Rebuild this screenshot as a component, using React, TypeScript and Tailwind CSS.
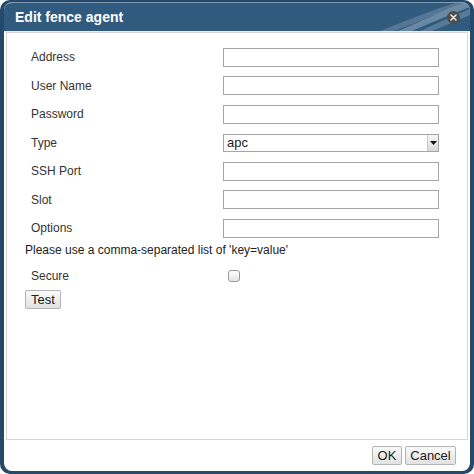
const FIELDS = ["Address", "User Name", "Password", "Type", "SSH Port", "Slot", "Options"];

const font = { fontFamily: '"Liberation Sans", Arial, sans-serif' };

function TextBox() {
  return <div className="h-[19px] w-[216px] border border-[#a5a5a5] bg-white" />;
}

function SelectBox({ value }: { value: string }) {
  return (
    <div className="flex h-[18px] w-[216px] items-center border border-[#a5a5a5] bg-white">
      <span className="flex-1 pl-[3px] text-[13px] leading-none text-[#222]">{value}</span>
      <div className="flex h-full w-[11px] items-center justify-center border-l border-[#c8c8c8] bg-gradient-to-b from-[#f6f6f6] to-[#d9d9d9]">
        <svg width="7" height="4" viewBox="0 0 7 4">
          <path d="M0 0h7L3.5 4z" fill="#111" />
        </svg>
      </div>
    </div>
  );
}

function Btn({ label, w }: { label: string; w: string }) {
  return (
    <button
      className={`h-[19px] ${w} rounded-[2px] border border-[#b3b3b3] bg-gradient-to-b from-[#fafafa] to-[#e2e2e2] text-[13px] leading-none text-[#222]`}
      style={font}
    >
      {label}
    </button>
  );
}

export default function App() {
  return (
    <div className="h-[474px] w-[474px] rounded-[10px] bg-[#25496a] px-[4px] pb-[3px] pt-[2px]" style={font}>
      <div className="flex h-full flex-col overflow-hidden rounded-[8px] border-t border-[#7f9ab2] bg-white">
        {/* title bar */}
        <div className="relative flex h-[28px] items-center bg-[#305a7e] pl-[11px]">
          <svg className="absolute right-0 top-0" width="110" height="28" viewBox="0 0 110 28">
            <path d="M20 28 C45 18 70 8 95 0 L104 0 C80 10 55 20 34 28 Z" fill="#ffffff" opacity="0.18" />
            <path d="M38 28 C62 18 82 8 104 0 L110 0 L110 4 C90 12 70 20 52 28 Z" fill="#ffffff" opacity="0.28" />
            <path d="M60 28 C78 20 95 12 110 6 L110 12 C96 18 84 23 72 28 Z" fill="#ffffff" opacity="0.2" />
          </svg>
          <span className="relative text-[14px] font-bold text-white">Edit fence agent</span>
          <div className="absolute right-[10px] top-[8px] flex h-[13px] w-[13px] items-center justify-center rounded-full bg-[#4d4d4d]">
            <svg width="7" height="7" viewBox="0 0 7 7">
              <path d="M1 1l5 5M6 1l-5 5" stroke="#e6e6e6" strokeWidth="1.6" strokeLinecap="round" />
            </svg>
          </div>
        </div>
        <div className="h-px bg-[#e8eef3]" />

        {/* content panel */}
        <div className="mx-[2px] flex-1 border border-[#d4d4d4] px-[18px] pt-[10px] text-[12px] text-[#333]">
          {FIELDS.map((f) => (
            <div key={f} className="flex h-[28.5px] items-center">
              <span className="w-[198px] pl-[6px]">{f}</span>
              {f === "Type" ? <SelectBox value="apc" /> : <TextBox />}
            </div>
          ))}
          <div className="flex h-[15px] items-center text-[#222]">Please use a comma-separated list of 'key=value'</div>
          <div className="mt-[4px] flex h-[28.5px] items-center">
            <span className="w-[203px] pl-[6px]">Secure</span>
            <div className="h-[12px] w-[12px] rounded-[3px] border border-[#9a9a9a] bg-gradient-to-b from-[#ffffff] to-[#e4e4e4]" />
          </div>
          <Btn label="Test" w="w-[36px]" />
        </div>

        {/* footer */}
        <div className="flex h-[31px] items-center justify-end gap-[3px] pr-[14px]">
          <Btn label="OK" w="w-[30px]" />
          <Btn label="Cancel" w="w-[51px]" />
        </div>
      </div>
    </div>
  );
}
